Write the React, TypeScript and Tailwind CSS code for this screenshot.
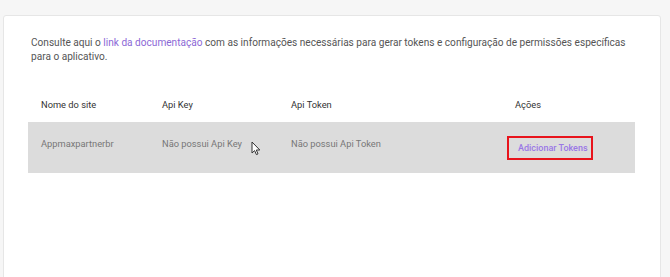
import { FC } from "react";

const Cursor: FC = () => (
  <svg width="10" height="15" viewBox="0 0 10 15" className="absolute left-[251px] top-[141px]">
    <path d="M1 1 L1 12 L3.6 9.6 L5.4 13.6 L7 12.9 L5.3 9 L8.8 9 Z" fill="#fff" stroke="#333" strokeWidth="1" strokeLinejoin="round" />
  </svg>
);

const App: FC = () => {
  return (
    <div className="w-[670px] h-[277px] bg-[#f6f6f6] pt-[15px] pl-[3px] overflow-hidden relative" style={{ fontFamily: "Roboto, 'Liberation Sans', sans-serif" }}>
      <div className="w-[658px] h-[280px] bg-white border border-[#e6e6e6] rounded-[3px] pl-[24px] pr-[25px] pt-[20px]">
        <p className="text-[10.1px] leading-[14px] text-[#555] pl-[3px]">
          Consulte aqui o <span className="text-[#8b68d6]">link da documentação</span> com as informações necessárias para gerar tokens e configuração de permissões específicas para o aplicativo.
        </p>

        <div className="mt-[23px] w-[607px]">
          <div className="grid grid-cols-[121px_129px_224px_133px] h-[35px] items-center text-[9.3px] text-[#333]">
            <div className="pl-[13px]">Nome do site</div>
            <div className="pl-[13px]">Api Key</div>
            <div className="pl-[13px]">Api Token</div>
            <div className="pl-[13px]">Ações</div>
          </div>
          <div className="grid grid-cols-[121px_129px_224px_133px] h-[51px] items-center bg-[#dcdcdc] text-[9.3px] text-[#777]">
            <div className="pl-[13px] pb-[7px]">Appmaxpartnerbr</div>
            <div className="pl-[13px] pb-[7px]">Não possui Api Key</div>
            <div className="pl-[13px] pb-[7px]">Não possui Api Token</div>
            <div className="pl-[5px]">
              <button className="w-[86px] h-[24px] border-2 border-[#e8141c] text-[#9a77e6] font-medium text-[9px] pl-[9px] pt-[3px] text-left whitespace-nowrap">
                Adicionar Tokens
              </button>
            </div>
          </div>
        </div>
      </div>
      <Cursor />
    </div>
  );
};

export default App;
